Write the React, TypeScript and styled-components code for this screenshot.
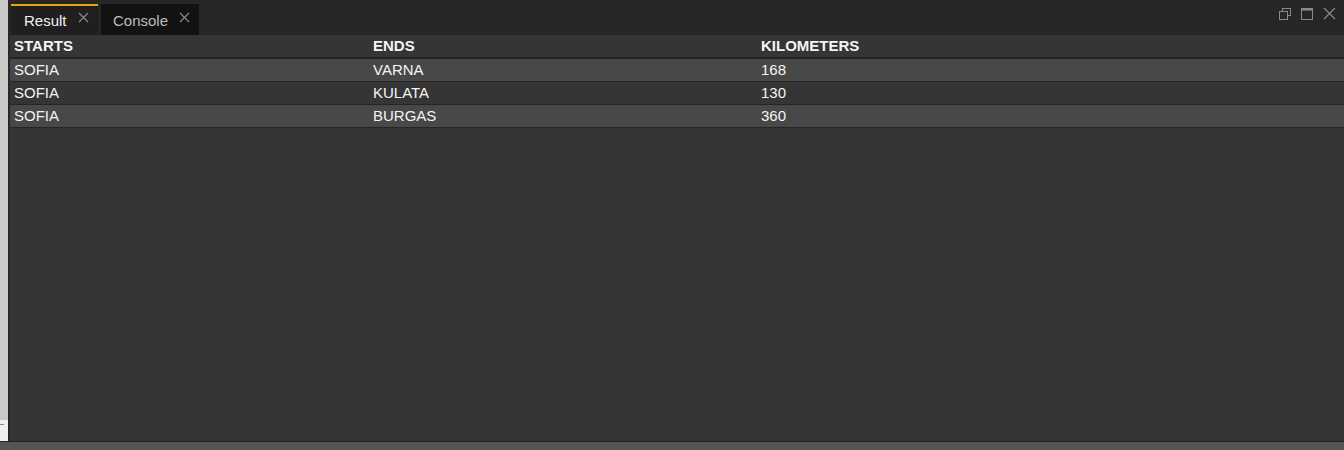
import React from "react";
import styled, { createGlobalStyle } from "styled-components";

const Global = createGlobalStyle`
  html, body { margin: 0; padding: 0; width: 1344px; height: 450px; overflow: hidden; background: #555; }
  * { box-sizing: border-box; }
`;

const Frame = styled.div`
  display: flex;
  flex-direction: column;
  width: 1344px;
  height: 450px;
  font-family: "Liberation Sans", Arial, sans-serif;
`;

const Body = styled.div`
  display: flex;
  height: 442px;
  border-bottom: 1px solid #242424;
`;

const SideStrip = styled.div`
  width: 8px;
  display: flex;
  flex-direction: column;
  background: #f0f0f0;
`;

const SideGray = styled.div`
  height: 420px;
  background: #c9c9c9;
`;

const SideMark = styled.div`
  margin-top: 4px;
  width: 4px;
  height: 1px;
  background: #888;
`;

const Panel = styled.div`
  flex: 1;
  display: flex;
  flex-direction: column;
  background: #353535;
  border-left: 2px solid #272727;
`;

const TabBar = styled.div`
  height: 35px;
  background: #262626;
  display: flex;
  align-items: flex-end;
  padding-left: 1px;
  gap: 3px;
  position: relative;
`;

const Tab = styled.div<{ $active?: boolean }>`
  height: 31px;
  display: flex;
  align-items: center;
  padding: 0 0 0 ${(p) => (p.$active ? "13px" : "12px")};
  gap: 11px;
  background: ${(p) => (p.$active ? "#1f1f1f" : "#121212")};
  border-top: 2px solid ${(p) => (p.$active ? "#e8a316" : "transparent")};
  color: ${(p) => (p.$active ? "#f2f2f2" : "#bdbdbd")};
  font-size: 15px;
  width: ${(p) => (p.$active ? "87px" : "98px")};
`;

const TabLabel = styled.span`
  padding-top: 0;
`;

const CloseX = styled.svg`
  margin-top: -6px;
`;

const WinIcons = styled.div`
  position: absolute;
  right: 8px;
  top: 7px;
  display: flex;
  gap: 10px;
  align-items: center;
`;

const Table = styled.div`
  display: flex;
  flex-direction: column;
`;

const Row = styled.div<{ $alt?: boolean; $head?: boolean }>`
  display: grid;
  grid-template-columns: 359px 388px 1fr;
  height: 23px;
  align-items: center;
  padding: 0 0 2px 4px;
  background: ${(p) => (p.$head ? "#353535" : p.$alt ? "#484848" : "#353535")};
  border-bottom: 1px solid #252525;
  ${(p) => (p.$head ? "border-bottom: 2px solid #252525; height: 24px;" : "")}
  color: #f4f4f4;
  font-size: 15px;
  font-weight: ${(p) => (p.$head ? 700 : 400)};
`;

const Cell = styled.div`
  white-space: nowrap;
`;

const X = () => (
  <CloseX width="11" height="11" viewBox="0 0 11 11">
    <path d="M1 1 L10 10 M10 1 L1 10" stroke="#8a8a8a" strokeWidth="1.2" />
  </CloseX>
);

const rows = [
  ["SOFIA", "VARNA", "168"],
  ["SOFIA", "KULATA", "130"],
  ["SOFIA", "BURGAS", "360"],
];

export default function App() {
  return (
    <Frame>
      <Global />
      <Body>
        <SideStrip>
          <SideGray />
          <SideMark />
        </SideStrip>
        <Panel>
          <TabBar>
            <Tab $active>
              <TabLabel>Result</TabLabel>
              <X />
            </Tab>
            <Tab>
              <TabLabel>Console</TabLabel>
              <X />
            </Tab>
            <WinIcons>
              <svg width="12" height="12" viewBox="0 0 12 12">
                <rect x="3.5" y="0.5" width="8" height="7" fill="none" stroke="#8a8a8a" />
                <rect x="0.5" y="3.5" width="8" height="8" fill="#262626" stroke="#8a8a8a" />
              </svg>
              <svg width="12" height="12" viewBox="0 0 12 12">
                <rect x="0.5" y="0.5" width="11" height="11" fill="none" stroke="#8a8a8a" />
                <rect x="0.5" y="0.5" width="11" height="2" fill="#8a8a8a" />
              </svg>
              <svg width="13" height="13" viewBox="0 0 13 13">
                <path d="M1 1 L12 12 M12 1 L1 12" stroke="#8a8a8a" strokeWidth="1.2" />
              </svg>
            </WinIcons>
          </TabBar>
          <Table>
            <Row $head>
              <Cell>STARTS</Cell>
              <Cell>ENDS</Cell>
              <Cell>KILOMETERS</Cell>
            </Row>
            {rows.map((r, i) => (
              <Row key={i} $alt={i % 2 === 0}>
                {r.map((c, j) => (
                  <Cell key={j}>{c}</Cell>
                ))}
              </Row>
            ))}
          </Table>
        </Panel>
      </Body>
    </Frame>
  );
}
